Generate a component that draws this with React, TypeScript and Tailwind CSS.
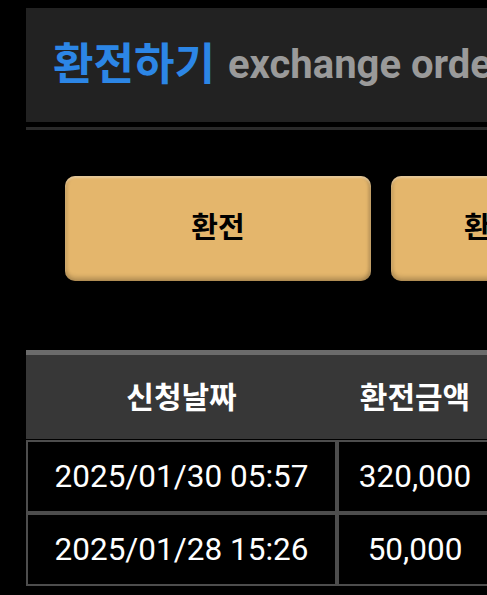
import React from "react";

const rows = [
  { date: "2025/01/30 05:57", amount: "320,000" },
  { date: "2025/01/28 15:26", amount: "50,000" },
];

const btn =
  "flex h-[105px] w-[306px] shrink-0 items-center justify-center rounded-[10px] bg-[#e4b66c] text-[29px] font-bold text-black shadow-[inset_0_2px_2px_rgba(255,255,255,0.35),inset_0_-4px_4px_rgba(0,0,0,0.18),inset_-3px_0_3px_rgba(0,0,0,0.12),inset_3px_0_3px_rgba(0,0,0,0.06)]";

export default function App() {
  return (
    <div
      className="h-[595px] w-[487px] overflow-hidden bg-black"
      style={{ fontFamily: 'Roboto, "Noto Sans CJK KR", sans-serif' }}
    >
      <div className="w-[560px] pl-[26px] pt-[8px]">
        <div className="flex h-[114px] items-center bg-[#222222] pl-[27px] whitespace-nowrap">
          <span className="text-[44px] font-bold leading-none text-[#2c86e6]">
            환전하기
          </span>
          <span className="ml-[13px] text-[40px] font-bold leading-none text-[#9a9a9a]">
            exchange order
          </span>
        </div>
        <div className="mt-[5px] h-[3px] bg-[#2a2a2a]" />

        <div className="mt-[46px] flex gap-[20px] pl-[39px]">
          <div className={btn}>환전</div>
          <div className={btn}>환전신청내역</div>
        </div>

        <table className="mt-[69px] border-separate border-spacing-0 text-white">
          <thead>
            <tr>
              <th className="h-[90px] w-[311px] border-t-[5px] border-b border-t-[#6b6b6b] border-b-black bg-[#373737] p-0 text-[30px] font-bold">
                신청날짜
              </th>
              <th className="h-[90px] w-[156px] border-t-[5px] border-b border-t-[#6b6b6b] border-b-black bg-[#373737] p-0 text-[30px] font-bold">
                환전금액
              </th>
            </tr>
          </thead>
          <tbody>
            {rows.map((r) => (
              <tr key={r.date}>
                <td className="h-[73px] border-2 border-[#4d4d4d] p-0 text-center text-[31.5px] font-normal">
                  {r.date}
                </td>
                <td className="h-[73px] border-2 border-[#4d4d4d] p-0 text-center text-[31.5px] font-normal">
                  {r.amount}
                </td>
              </tr>
            ))}
          </tbody>
        </table>
      </div>
    </div>
  );
}
